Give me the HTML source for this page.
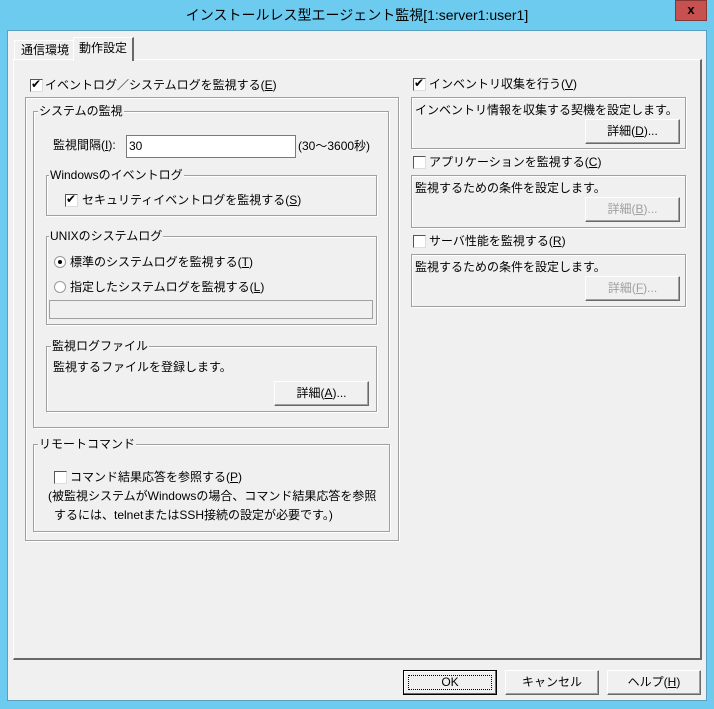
<!DOCTYPE html>
<html><head><meta charset="utf-8"><style>
*{margin:0;padding:0;box-sizing:border-box}
body{width:714px;height:709px;background:#6ccbef;position:relative;overflow:hidden;font:12px "Liberation Sans","Noto Sans CJK JP",sans-serif;color:#000}
.a{position:absolute;white-space:nowrap}
.t{line-height:14px}
.g{position:absolute;border:1px solid #a0a0a0;box-shadow:inset 1px 1px 0 #fff,1px 1px 0 #fff}
.gl{position:absolute;background:#f0f0f0;padding:0 1px;line-height:14px;white-space:nowrap}
.cb{position:absolute;width:13px;height:13px;border:1px solid #555;background:#fff;border-right-color:#ddd;border-bottom-color:#ddd}
.rb{position:absolute;width:12px;height:12px;border-radius:50%;border:1px solid #999;background:#fff}
.btn{position:absolute;height:25px;background:#f0f0f0;border:1px solid;border-color:#fff #696969 #696969 #fff;box-shadow:inset -1px -1px 0 #a0a0a0;text-align:center;line-height:22px}
.dis{color:#a0a0a0}
u{text-decoration:underline}
</style></head><body>
<div class="a" style="left:0;top:0;width:714px;height:31px;text-align:center;font-size:14px;line-height:31px;color:#000">インストールレス型エージェント監視[1:server1:user1]</div>
<div class="a" style="left:675px;top:0;width:32px;height:21px;background:#c75050;border:1px solid #8a3535;color:#000;font-weight:bold;text-align:center;line-height:18px;font-size:13px">x</div>
<div class="a" style="left:7px;top:30px;width:700px;height:671px;background:#f0f0f0;border:1px solid #5a9fc0"></div>
<div class="a" style="left:14px;top:40px;width:60px;height:20px;border:1px solid #fff;border-right-color:#a0a0a0;border-bottom:none;line-height:18px;padding-left:6px">通信環境</div>
<div class="a" style="left:73px;top:37px;width:61px;height:24px;border:1px solid #fff;border-right:2px solid #696969;border-bottom:none;background:#f0f0f0;line-height:20px;padding-left:5px;z-index:2">動作設定</div>
<div class="a" style="left:13px;top:59px;width:689px;height:601px;border:1px solid #fff;border-right:2px solid #696969;border-bottom:2px solid #696969"></div>
<div class="cb" style="left:30px;top:79px"></div><div class="a t" style="left:31px;top:77px;font-size:12px">✔</div>
<div class="a t" style="left:45px;top:78px">イベントログ／システムログを監視する(<u>E</u>)</div>
<div class="g" style="left:25px;top:97px;width:374px;height:444px"></div>
<div class="g" style="left:33px;top:111px;width:356px;height:317px"></div>
<div class="gl" style="left:38px;top:104px">システムの監視</div>
<div class="a t" style="left:53px;top:138px">監視間隔(<u>I</u>):</div>
<div class="a" style="left:126px;top:135px;width:170px;height:23px;background:#fff;border:1px solid #7a7a7a;padding:3px 2px;line-height:15px">30</div>
<div class="a t" style="left:298px;top:139px">(30～3600秒)</div>
<div class="g" style="left:46px;top:175px;width:331px;height:41px"></div>
<div class="gl" style="left:49px;top:168px">Windowsのイベントログ</div>
<div class="cb" style="left:65px;top:194px"></div><div class="a t" style="left:66px;top:192px">✔</div>
<div class="a t" style="left:82px;top:193px">セキュリティイベントログを監視する(<u>S</u>)</div>
<div class="g" style="left:46px;top:236px;width:331px;height:89px"></div>
<div class="gl" style="left:49px;top:229px">UNIXのシステムログ</div>
<div class="rb" style="left:54px;top:256px"></div><div class="a" style="left:58px;top:260px;width:4px;height:4px;background:#000;border-radius:50%"></div>
<div class="a t" style="left:70px;top:255px">標準のシステムログを監視する(<u>T</u>)</div>
<div class="rb" style="left:54px;top:281px"></div>
<div class="a t" style="left:70px;top:280px">指定したシステムログを監視する(<u>L</u>)</div>
<div class="a" style="left:49px;top:300px;width:324px;height:19px;border:1px solid #a0a0a0;background:#f0f0f0"></div>
<div class="g" style="left:46px;top:346px;width:331px;height:66px"></div>
<div class="gl" style="left:51px;top:339px">監視ログファイル</div>
<div class="a t" style="left:53px;top:360px">監視するファイルを登録します。</div>
<div class="btn" style="left:274px;top:381px;width:95px">詳細(<u>A</u>)...</div>
<div class="g" style="left:33px;top:444px;width:357px;height:88px"></div>
<div class="gl" style="left:38px;top:437px">リモートコマンド</div>
<div class="cb" style="left:54px;top:471px"></div>
<div class="a t" style="left:70px;top:470px">コマンド結果応答を参照する(<u>P</u>)</div>
<div class="a t" style="left:48px;top:489px">(被監視システムがWindowsの場合、コマンド結果応答を参照</div>
<div class="a t" style="left:54px;top:508px">するには、telnetまたはSSH接続の設定が必要です。)</div>
<div class="cb" style="left:413px;top:78px"></div><div class="a t" style="left:414px;top:76px">✔</div>
<div class="a t" style="left:429px;top:77px">インベントリ収集を行う(<u>V</u>)</div>
<div class="g" style="left:411px;top:97px;width:275px;height:52px"></div>
<div class="a t" style="left:415px;top:103px">インベントリ情報を収集する契機を設定します。</div>
<div class="btn" style="left:585px;top:119px;width:95px">詳細(<u>D</u>)...</div>
<div class="cb" style="left:413px;top:156px"></div>
<div class="a t" style="left:429px;top:155px">アプリケーションを監視する(<u>C</u>)</div>
<div class="g" style="left:411px;top:175px;width:275px;height:53px"></div>
<div class="a t" style="left:415px;top:181px">監視するための条件を設定します。</div>
<div class="btn dis" style="left:585px;top:197px;width:95px">詳細(<u>B</u>)...</div>
<div class="cb" style="left:413px;top:235px"></div>
<div class="a t" style="left:429px;top:234px">サーバ性能を監視する(<u>R</u>)</div>
<div class="g" style="left:411px;top:254px;width:275px;height:53px"></div>
<div class="a t" style="left:415px;top:260px">監視するための条件を設定します。</div>
<div class="btn dis" style="left:585px;top:276px;width:95px">詳細(<u>F</u>)...</div>
<div class="btn" style="left:403px;top:670px;width:94px;border:1px solid #000;box-shadow:inset -1px -1px 0 #696969,inset 1px 1px 0 #fff"><span style="position:absolute;left:4px;top:4px;right:4px;bottom:4px;border:1px dotted #000"></span><span style="position:relative">OK</span></div>
<div class="btn" style="left:505px;top:670px;width:94px">キャンセル</div>
<div class="btn" style="left:607px;top:670px;width:94px">ヘルプ(<u>H</u>)</div>
</body></html>
